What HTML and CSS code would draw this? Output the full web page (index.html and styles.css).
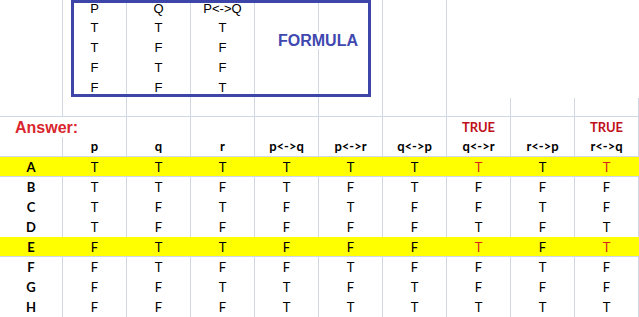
FILE: index.html
```html
<!DOCTYPE html>
<html>
<head>
<meta charset="utf-8">
<link rel="stylesheet" href="styles.css">
</head>
<body>
<div class="sheet">
  <div class="row first top">
    <div class="c"></div><div class="c">P</div><div class="c">Q</div><div class="c">P&lt;-&gt;Q</div><div class="c"></div><div class="c"></div><div class="c"></div><div class="c"></div><div class="c"></div><div class="c"></div>
  </div>
  <div class="row top">
    <div class="c"></div><div class="c">T</div><div class="c">T</div><div class="c">T</div><div class="c"></div><div class="c"></div><div class="c"></div><div class="c"></div><div class="c"></div><div class="c"></div>
  </div>
  <div class="row top">
    <div class="c"></div><div class="c">T</div><div class="c">F</div><div class="c">F</div><div class="c"></div><div class="c"></div><div class="c"></div><div class="c"></div><div class="c"></div><div class="c"></div>
  </div>
  <div class="row top">
    <div class="c"></div><div class="c">F</div><div class="c">T</div><div class="c">F</div><div class="c"></div><div class="c"></div><div class="c"></div><div class="c"></div><div class="c"></div><div class="c"></div>
  </div>
  <div class="row top">
    <div class="c"></div><div class="c">F</div><div class="c">F</div><div class="c">T</div><div class="c"></div><div class="c"></div><div class="c"></div><div class="c"></div><div class="c"></div><div class="c"></div>
  </div>
  <div class="row">
    <div class="c"></div><div class="c"></div><div class="c"></div><div class="c"></div><div class="c"></div><div class="c"></div><div class="c"></div><div class="c"></div><div class="c"></div><div class="c"></div>
  </div>
  <div class="row">
    <div class="c answer">Answer:</div><div class="c"></div><div class="c"></div><div class="c"></div><div class="c"></div><div class="c"></div><div class="c true">TRUE</div><div class="c"></div><div class="c true">TRUE</div>
  </div>
  <div class="row head">
    <div class="c"></div><div class="c">p</div><div class="c">q</div><div class="c">r</div><div class="c">p&lt;-&gt;q</div><div class="c">p&lt;-&gt;r</div><div class="c">q&lt;-&gt;p</div><div class="c">q&lt;-&gt;r</div><div class="c">r&lt;-&gt;p</div><div class="c">r&lt;-&gt;q</div>
  </div>
  <div class="row data hl">
    <div class="c lab">A</div><div class="c">T</div><div class="c">T</div><div class="c">T</div><div class="c">T</div><div class="c">T</div><div class="c">T</div><div class="c red">T</div><div class="c">T</div><div class="c red">T</div>
  </div>
  <div class="row data">
    <div class="c lab">B</div><div class="c">T</div><div class="c">T</div><div class="c">F</div><div class="c">T</div><div class="c">F</div><div class="c">T</div><div class="c">F</div><div class="c">F</div><div class="c">F</div>
  </div>
  <div class="row data">
    <div class="c lab">C</div><div class="c">T</div><div class="c">F</div><div class="c">T</div><div class="c">F</div><div class="c">T</div><div class="c">F</div><div class="c">F</div><div class="c">T</div><div class="c">F</div>
  </div>
  <div class="row data">
    <div class="c lab">D</div><div class="c">T</div><div class="c">F</div><div class="c">F</div><div class="c">F</div><div class="c">F</div><div class="c">F</div><div class="c">T</div><div class="c">F</div><div class="c">T</div>
  </div>
  <div class="row data hl">
    <div class="c lab">E</div><div class="c">F</div><div class="c">T</div><div class="c">T</div><div class="c">F</div><div class="c">F</div><div class="c">F</div><div class="c red">T</div><div class="c">F</div><div class="c red">T</div>
  </div>
  <div class="row data">
    <div class="c lab">F</div><div class="c">F</div><div class="c">T</div><div class="c">F</div><div class="c">F</div><div class="c">T</div><div class="c">F</div><div class="c">F</div><div class="c">T</div><div class="c">F</div>
  </div>
  <div class="row data">
    <div class="c lab">G</div><div class="c">F</div><div class="c">F</div><div class="c">T</div><div class="c">T</div><div class="c">F</div><div class="c">T</div><div class="c">F</div><div class="c">F</div><div class="c">F</div>
  </div>
  <div class="row data">
    <div class="c lab">H</div><div class="c">F</div><div class="c">F</div><div class="c">F</div><div class="c">T</div><div class="c">T</div><div class="c">T</div><div class="c">T</div><div class="c">T</div><div class="c">T</div>
  </div>

  <div class="formula-box"><span class="formula">FORMULA</span></div>
  <div class="blank-area"></div>
</div>
</body>
</html>
```

FILE: styles.css
```css
html, body {
  margin: 0;
  padding: 0;
  background: #ffffff;
}

.sheet {
  position: relative;
  width: 639px;
  height: 317px;
  overflow: hidden;
  display: flex;
  flex-direction: column;
  gap: 1px;
  background: #d0d7e5;
  font-family: "Liberation Sans", Arial, sans-serif;
  color: #000;
}

.row {
  display: grid;
  grid-template-columns: 62px repeat(9, 63px);
  column-gap: 1px;
  height: 19px;
  flex: 0 0 19px;
  background: #d0d7e5;
}

.row.first {
  height: 16px;
  flex: 0 0 16px;
}

.c {
  background: #ffffff;
  text-align: center;
  white-space: nowrap;
  font-size: 13px;
  line-height: 21px;
}

.row.first .c {
  line-height: 17px;
}

.row.hl {
  background: #ffff00;
}

.row.hl .c {
  background: transparent;
}

.data .c,
.head .c {
  font-family: Lato, "Liberation Sans", sans-serif;
  font-size: 13px;
  line-height: 20px;
}

.head .c {
  font-weight: 700;
  line-height: 18px;
}

.data .lab {
  font-weight: 700;
}

.data .red {
  color: #d2281e;
}

.answer {
  grid-column: span 2;
  text-align: left;
  padding-left: 15px;
  font-weight: 700;
  font-size: 16px;
  line-height: 21px;
  color: #d9262e;
}

.true {
  font-family: Lato, "Liberation Sans", sans-serif;
  font-weight: 700;
  font-size: 13px;
  line-height: 20px;
  color: #c0101a;
}

.formula-box {
  position: absolute;
  left: 71px;
  top: 0;
  width: 300px;
  height: 97px;
  box-sizing: border-box;
  border: 3px solid #3d46a8;
}

.formula {
  position: absolute;
  left: 202px;
  top: 29px;
  padding: 1px 2px;
  background: #ffffff;
  font-weight: 700;
  font-size: 16px;
  line-height: 15px;
  color: #4048b0;
}

.blank-area {
  position: absolute;
  left: 447px;
  top: 0;
  width: 192px;
  height: 98px;
  background: #ffffff;
}
```
